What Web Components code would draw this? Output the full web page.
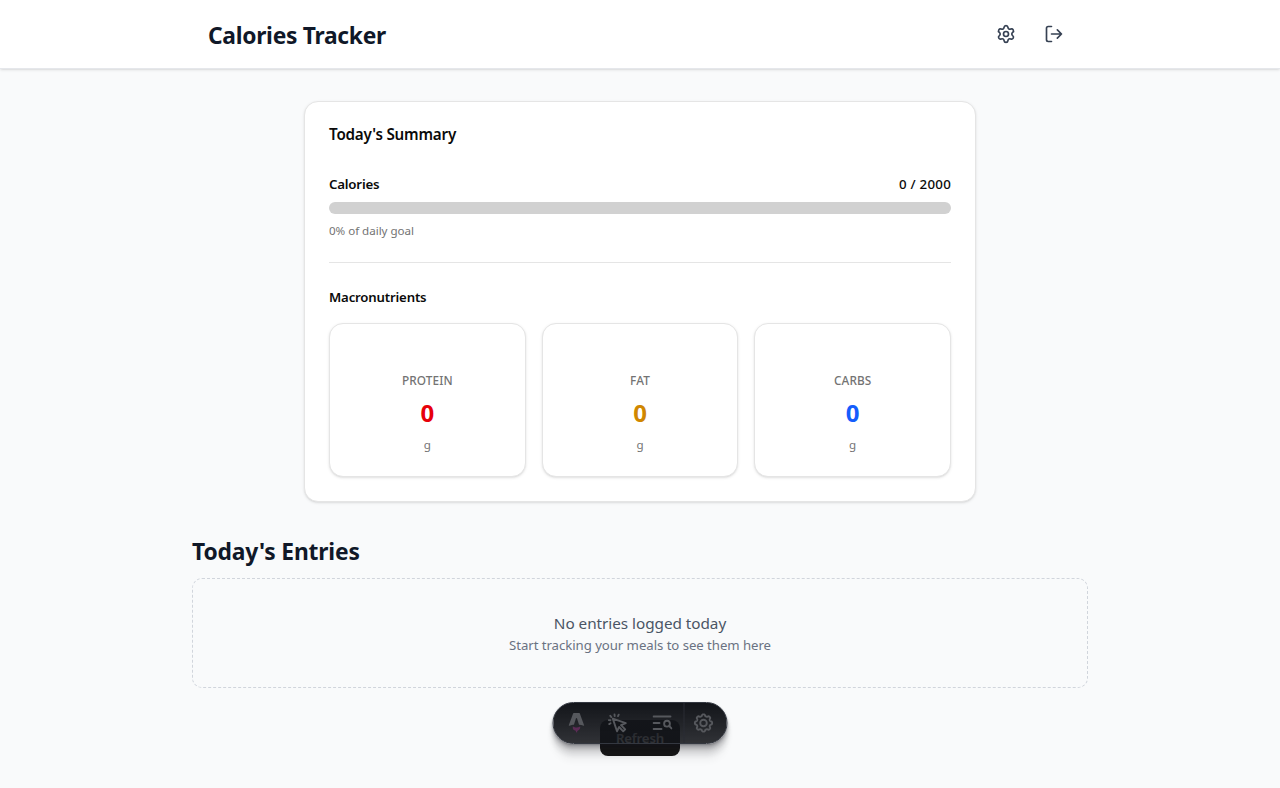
<!DOCTYPE html>
<html lang="en">
<head>
<meta charset="utf-8">
<title>Calories Tracker</title>
<style>
html,body{margin:0;height:100%}
body{background:#f9fafb;color:#0a0a0a;font-family:"Segoe UI","Noto Sans",sans-serif;overflow:hidden}
</style>
</head>
<body>
<tracker-app></tracker-app>
<script>
const define = (name, html) => customElements.define(name, class extends HTMLElement {
  constructor() {
    super();
    const t = document.createElement('template');
    t.innerHTML = html;
    this.attachShadow({mode: 'open'}).append(t.content.cloneNode(true));
  }
});

define('app-header', `<style>
:host{display:block;background:#fff;border-bottom:1px solid #e5e7eb;box-shadow:0 1px 3px #0000001a,0 1px 2px -1px #0000001a;height:68px}
.row{max-width:864px;height:68px;margin:auto;display:flex;align-items:center;justify-content:space-between}
h1{margin:4px 0 0;font-size:22.8px;line-height:32px;font-weight:700;letter-spacing:-.28px;color:#101828;white-space:nowrap}
nav{display:flex;gap:8px;margin-right:-2px}
button{all:unset;box-sizing:border-box;width:40px;height:40px;padding:10px}
svg{display:block;width:20px;height:20px;fill:none;stroke:#364153;stroke-width:2;stroke-linecap:round;stroke-linejoin:round}
</style>
<div class="row"><h1><slot></slot></h1><nav>
<button aria-label="Settings"><svg viewBox="0 0 24 24"><path d="M9.671 4.136a2.34 2.34 0 0 1 4.659 0 2.34 2.34 0 0 0 3.319 1.915 2.34 2.34 0 0 1 2.33 4.033 2.34 2.34 0 0 0 0 3.831 2.34 2.34 0 0 1-2.33 4.033 2.34 2.34 0 0 0-3.319 1.915 2.34 2.34 0 0 1-4.659 0 2.34 2.34 0 0 0-3.32-1.915 2.34 2.34 0 0 1-2.33-4.033 2.34 2.34 0 0 0 0-3.831A2.34 2.34 0 0 1 6.35 6.051a2.34 2.34 0 0 0 3.319-1.915"/><circle cx="12" cy="12" r="3"/></svg></button>
<button aria-label="Log out"><svg viewBox="0 0 24 24"><path d="m16 17 5-5-5-5M21 12H9M9 21H5a2 2 0 0 1-2-2V5a2 2 0 0 1 2-2h4"/></svg></button>
</nav></div>`);

define('ui-card', `<style>
:host{display:block;box-sizing:border-box;background:#fff;border:1px solid #e5e5e5;border-radius:14px;box-shadow:0 1px 3px #0000001a,0 1px 2px -1px #0000001a}
</style><slot></slot>`);

define('calorie-progress', `<style>
:host{display:block;padding-bottom:23px;border-bottom:1px solid #e5e5e5}
.row{display:flex;justify-content:space-between;font-size:13.3px;line-height:20px;font-weight:600}
.l{letter-spacing:-.22px}
.v{letter-spacing:.24px;font-weight:550}
.bar{height:12px;margin-top:8px;border-radius:6px;background:#d1d1d1}
p{margin:9px 0 0;font-size:11.6px;line-height:16px;letter-spacing:-.03px;color:#737373}
</style>
<div class="row"><span class="l"><slot></slot></span><span class="v"><slot name="value"></slot></span></div>
<div class="bar"></div><p><slot name="note"></slot></p>`);

define('macro-card', `<style>
:host{display:block;min-width:0}
ui-card{height:154px;padding-top:48px;text-align:center}
.n{font-size:11.8px;line-height:16px;font-weight:550;letter-spacing:.1px;color:#737373}
.v{font-size:24px;line-height:32px;font-weight:700;margin-top:9px;color:var(--accent)}
.u{font-size:11.6px;line-height:16px;margin-top:8px;color:#737373}
</style>
<ui-card><div class="n"><slot></slot></div><div class="v"><slot name="value"></slot></div><div class="u">g</div></ui-card>`);

define('daily-summary', `<style>
:host{display:block;width:672px;margin:0 auto}
ui-card{padding:24px;height:401px}
h2{margin:-4px 0 28px;font-size:15.2px;line-height:24px;font-weight:600;letter-spacing:-.2px}
h3{margin:24px 0 16px;font-size:13.2px;line-height:20px;font-weight:600;letter-spacing:-.17px}
.grid{display:grid;grid-template-columns:repeat(3,1fr);gap:16px}
</style>
<ui-card><h2>Today's Summary</h2>
<calorie-progress>Calories<span slot="value">0 / 2000</span><span slot="note">0% of daily goal</span></calorie-progress>
<h3>Macronutrients</h3>
<div class="grid">
<macro-card style="--accent:#e7000b">PROTEIN<span slot="value">0</span></macro-card>
<macro-card style="--accent:#d08700">FAT<span slot="value">0</span></macro-card>
<macro-card style="--accent:#155dfc">CARBS<span slot="value">0</span></macro-card>
</div></ui-card>`);

define('entry-list', `<style>
:host{display:block;margin-top:32px}
h2{margin:0;font-size:22.8px;line-height:32px;padding:2px 0 10px;font-weight:700;letter-spacing:-.16px;color:#101828}
.empty{box-sizing:border-box;height:110px;padding-top:32px;border:1px dashed #d1d5dc;border-radius:10px;text-align:center}
p{margin:0}
.a{font-size:15.3px;line-height:24px;letter-spacing:-.04px;color:#4a5565}
.b{font-size:13.2px;line-height:20px;letter-spacing:-.05px;color:#6a7282}
</style>
<h2>Today's Entries</h2>
<div class="empty"><p class="a">No entries logged today</p><p class="b">Start tracking your meals to see them here</p></div>`);

define('refresh-button', `<style>
:host{display:flex;justify-content:center;margin-top:32px}
button{all:unset;box-sizing:border-box;width:80px;height:36px;border-radius:8px;background:#171717;color:#fff;font-size:13.2px;font-weight:600;letter-spacing:-.15px;line-height:37px;text-align:center}
</style><button><slot></slot></button>`);

define('dev-toolbar', `<style>
:host{position:fixed;left:50%;bottom:44px;transform:translateX(-50%);display:block}
.bar{box-sizing:border-box;display:flex;width:175px;height:42px;overflow:hidden;border:1px solid #343841;border-radius:999px;background:linear-gradient(180deg,#13151a 0%,rgba(19,21,26,.88) 100%)}
.shadow{border-radius:999px;box-shadow:0 1px 2px rgba(19,21,26,.29),0 4px 4px rgba(19,21,26,.26),0 10px 6px rgba(19,21,26,.15),0 17px 7px rgba(19,21,26,.04)}
.i{flex:none;box-sizing:border-box;width:43px;display:flex;align-items:center;justify-content:center;color:#56585d}
.i.g{width:43px;border-left:1px solid #2b2d34;padding-right:5px}
.i.a{padding-left:3px;width:43px}
svg{flex:none;display:block;fill:none;stroke:currentColor;stroke-width:1.9;stroke-linecap:round;stroke-linejoin:round}
</style>
<div class="shadow"><div class="bar">
<div class="i a"><svg width="16" height="20" viewBox="0 0 85 107" style="stroke:none"><path fill="#5c2c56" d="M23.4 70.7c3.4 4.3 8.3 5.6 13.3 6.3 7.7 1.2 15.3.8 22.5-2.8l2.5-1.4c.7 1.9.8 3.9.6 5.9-.6 4.9-3 8.7-6.9 11.6-1.5 1.1-3.2 2.2-4.8 3.2-4.9 3.4-6.2 7.3-4.4 12.9l.2.6c-2.5-1.1-4.3-2.8-5.7-4.9-1.5-2.3-2.2-4.8-2.2-7.5l-10.9-3.5C22.8 86.7 21.3 77.4 23.4 70.7z"/><path fill="currentColor" d="M0 69.6S14.3 62.6 28.7 62.6L39.5 29.1c.4-1.6 1.6-2.7 2.9-2.7 1.4 0 2.5 1.1 2.9 2.7l10.9 33.5c17 0 28.6 7 28.6 7S60.5 3.4 60.5 3.2C59.8 1.3 58.6 0 57 0H27.8c-1.6 0-2.7 1.3-3.4 3.2C24.3 3.3 0 69.6 0 69.6Z"/></svg></div>
<div class="i" style="padding-right:2px"><svg width="20" height="20" viewBox="0 0 20 20"><path d="M5.3 5.6 18.3 10.1 13.5 12.1 17.7 16.4 15.7 18.3 11.6 14 9.5 18.3Z"/><path d="M7.2 3 7 1.4M10.5 3.1 11.2 1.7M3.9 4.1 2.8 2.8M2.9 7.3 1.3 7.1M3.1 10.3 1.7 11.1"/></svg></div>
<div class="i" style="width:44px;padding-left:2px"><svg width="20" height="20" viewBox="0 0 20 20"><path d="M1 3.5H18M1 10H7M1 16H9"/><circle cx="14.5" cy="10.7" r="2.9"/><path d="m16.7 13 2.3 2.4"/></svg></div>
<div class="i g"><svg width="20" height="20" viewBox="0 0 20 20"><path id="gear"/><circle cx="10" cy="10" r="3.3"/></svg></div>
</div></div>`);

// Outline of the eight-lobed cog in the toolbar.
const cogPath = () => {
  let d = '';
  for (let i = 0; i < 160; i++) {
    const a = i * Math.PI / 80;
    const r = 7.8 + .9 * Math.tanh(1.8 * Math.cos(8 * a));
    d += (i ? 'L' : 'M') + (10 + r * Math.cos(a)).toFixed(2) + ' ' + (10 + r * Math.sin(a)).toFixed(2);
  }
  return d + 'Z';
};

define('tracker-app', `<style>
:host{display:block}
main{width:896px;margin:auto;padding-top:32px}
</style>
<app-header>Calories Tracker</app-header>
<main><daily-summary></daily-summary><entry-list></entry-list><refresh-button>Refresh</refresh-button></main>
<dev-toolbar></dev-toolbar>`);
document.querySelector('tracker-app').shadowRoot.querySelector('dev-toolbar').shadowRoot.getElementById('gear').setAttribute('d', cogPath());
</script>
</body>
</html>
